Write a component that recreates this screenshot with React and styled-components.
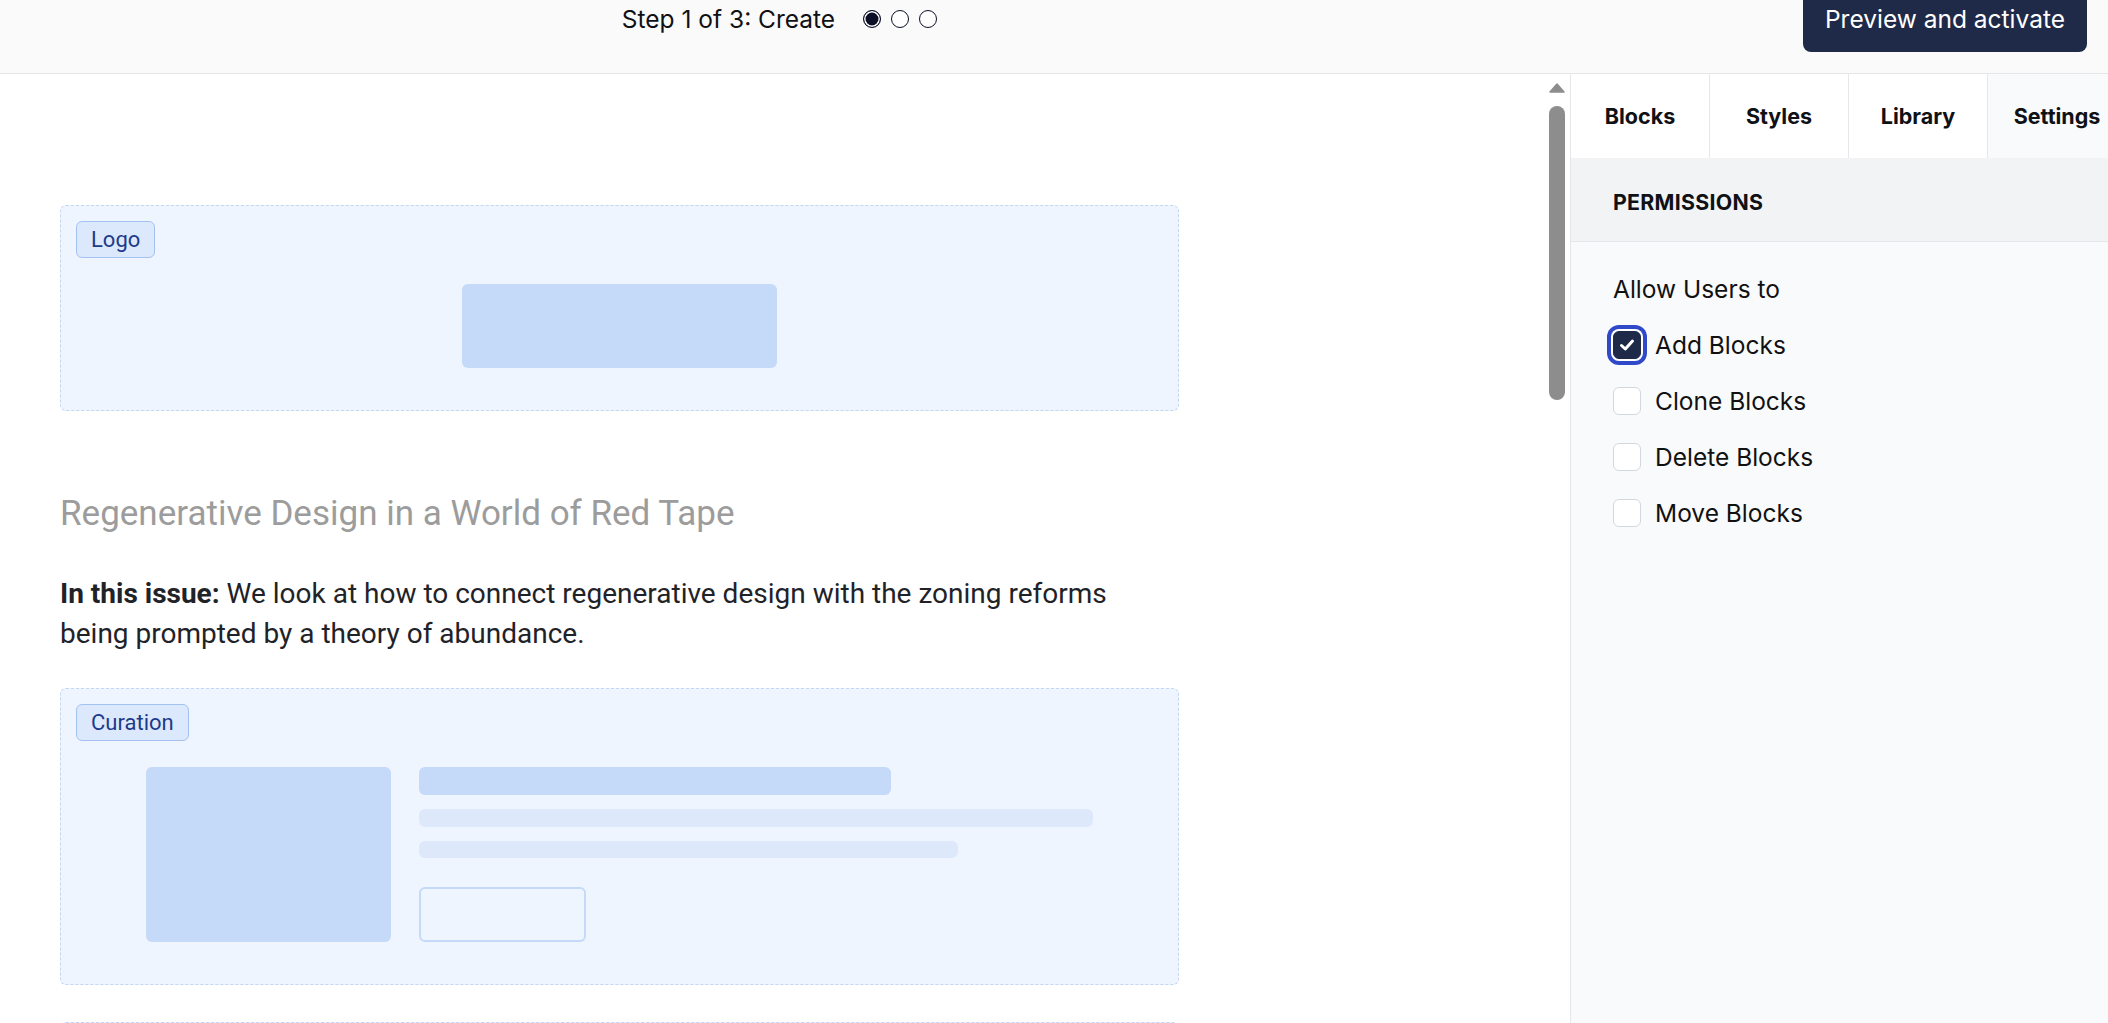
import React from 'react';
import styled, { createGlobalStyle } from 'styled-components';

const GlobalStyle = createGlobalStyle`
  html, body { margin: 0; padding: 0; height: 100%; overflow: hidden; background: #fff; }
  body { font-family: Inter, "Noto Sans", sans-serif; color: #111827; }
  *, *::before, *::after { box-sizing: border-box; }
`;

const Page = styled.div`
  width: 2108px;
  height: 1023px;
  display: flex;
  flex-direction: column;
  overflow: hidden;
`;

const Header = styled.header`
  flex: 0 0 74px;
  background: #fafafa;
  border-bottom: 1px solid #e6e6e6;
  display: flex;
  align-items: flex-start;
`;

const HeaderRow = styled.div`
  display: flex;
  align-items: center;
  width: 100%;
  height: 66px;
  margin-top: -14px;
`;

const StepArea = styled.div`
  flex: 0 0 1559px;
  display: flex;
  justify-content: center;
  align-items: center;
  gap: 28px;
`;

const StepText = styled.span`
  font-size: 24.5px;
  color: #0f1115;
`;

const Dots = styled.div`
  display: flex;
  gap: 10px;
`;

const Dot = styled.span`
  width: 18px;
  height: 18px;
  border-radius: 50%;
  border: 1.5px solid #0b1026;
  background: ${p => (p.$active ? '#0b1026' : '#fff')};
  box-shadow: ${p => (p.$active ? 'inset 0 0 0 1.5px #fff' : 'none')};
`;

const Spacer = styled.div`
  flex: 1;
`;

const PrimaryButton = styled.button`
  height: 66px;
  padding: 0 22px;
  margin-right: 21px;
  background: #1f2a48;
  color: #fff;
  border: none;
  border-radius: 8px;
  font-family: Inter, sans-serif;
  font-size: 24.5px;
  cursor: pointer;
`;

const Body = styled.div`
  flex: 1;
  display: flex;
  min-height: 0;
`;

const Canvas = styled.main`
  flex: 0 0 1570px;
  display: flex;
  overflow: hidden;
  background: #fff;
`;

const CanvasScroll = styled.div`
  flex: 1;
  padding: 131px 0 0 60px;
  overflow: hidden;
`;

const Column = styled.div`
  width: 1119px;
  display: flex;
  flex-direction: column;
  font-family: Roboto, "Liberation Sans", sans-serif;
`;

const Scrollbar = styled.div`
  flex: 0 0 16px;
  margin-right: 5px;
  display: flex;
  flex-direction: column;
  align-items: center;
  padding-top: 9px;
`;

const Thumb = styled.div`
  margin-top: 13px;
  width: 16px;
  height: 294px;
  border-radius: 8px;
  background: #8d8d8d;
`;

const Block = styled.section`
  display: flex;
  flex-direction: column;
  flex-shrink: 0;
  min-height: ${p => p.$minH || 0}px;
  background: #eff5ff;
  border: 1px dashed #c3d6f2;
  border-radius: 6px;
  padding: 15px 15px 42px;
  margin-top: ${p => p.$mt || 0}px;
`;

const Badge = styled.span`
  align-self: flex-start;
  height: 37px;
  padding: 0 14px;
  background: #dce9fd;
  border: 1px solid #a4c2f0;
  border-radius: 6px;
  color: #1e3a8a;
  font-size: 22px;
  line-height: 35px;
`;

const BlockBody = styled.div`
  margin-top: 26px;
  display: flex;
  justify-content: ${p => (p.$center ? 'center' : 'flex-start')};
  padding: ${p => (p.$center ? '0' : '0 70px')};
  gap: 28px;
`;

const LogoShape = styled.div`
  width: 315px;
  height: 84px;
  border-radius: 6px;
  background: #c5d9f9;
`;

const ImageShape = styled.div`
  flex: 0 0 245px;
  height: 175px;
  border-radius: 6px;
  background: #c5d9f9;
`;

const TextCol = styled.div`
  flex: 1;
  display: flex;
  flex-direction: column;
`;

const Bar = styled.div`
  width: ${p => p.$w}%;
  height: ${p => p.$h}px;
  margin-top: ${p => p.$mt || 0}px;
  border-radius: 6px;
  background: ${p => (p.$strong ? '#c5d9f9' : '#dde8fb')};
`;

const GhostButton = styled.div`
  margin-top: 29px;
  width: 167px;
  height: 55px;
  border: 2px solid #c5d9f9;
  border-radius: 6px;
`;

const Title = styled.h2`
  margin: 82px 0 0;
  font-size: 35px;
  line-height: 42px;
  font-weight: 400;
  color: #9c9c9c;
`;

const Paragraph = styled.p`
  margin: 39px 0 0;
  max-width: 1100px;
  font-size: 28px;
  line-height: 40px;
  color: #1f2328;
  strong { font-weight: 700; }
`;

const Sidebar = styled.aside`
  flex: 1;
  min-width: 0;
  display: flex;
  flex-direction: column;
  background: #f9fafb;
  border-left: 1px solid #e5e7eb;
  overflow: hidden;
`;

const Tabs = styled.nav`
  flex: 0 0 84px;
  display: flex;
`;

const Tab = styled.button`
  flex: 0 0 139px;
  border: none;
  border-right: 1px solid #e5e7eb;
  background: ${p => (p.$active ? '#f8fafc' : '#fff')};
  font-family: Inter, sans-serif;
  font-weight: 700;
  font-size: 21.5px;
  color: #0f1115;
  padding: 0;
`;

const SectionHeader = styled.div`
  flex: 0 0 84px;
  display: flex;
  align-items: center;
  padding: 5px 0 0 42px;
  background: #f1f3f5;
  border-bottom: 1px solid #e5e7eb;
  font-weight: 700;
  font-size: 21.3px;
  letter-spacing: 0.3px;
  color: #0f1115;
`;

const Panel = styled.div`
  padding: 31px 42px;
  display: flex;
  flex-direction: column;
`;

const PanelLabel = styled.div`
  font-size: 24.5px;
  line-height: 32px;
  color: #111;
  margin-bottom: 12px;
`;

const Row = styled.label`
  height: 56px;
  display: flex;
  align-items: center;
  gap: 14px;
  font-size: 24.5px;
  color: #111;
`;

const Box = styled.span`
  width: 28px;
  height: 28px;
  border-radius: 6px;
  display: flex;
  align-items: center;
  justify-content: center;
  background: ${p => (p.$checked ? '#1f2a48' : '#fff')};
  border: 1px solid ${p => (p.$checked ? '#1f2a48' : '#d4d7dd')};
  box-shadow: ${p => (p.$checked ? '0 0 0 2px #fff, 0 0 0 6px #2f49c9' : 'none')};
`;

const ArrowUp = () => (
  <svg width="16" height="10" viewBox="0 0 16 10">
    <path d="M8 1 L15 9 L1 9 Z" fill="#8d8d8d" stroke="#8d8d8d" strokeWidth="1.5" strokeLinejoin="round" />
  </svg>
);

const Check = () => (
  <svg width="20" height="20" viewBox="0 0 20 20">
    <path d="M4.5 10.5 L8.3 14 L15.5 6" fill="none" stroke="#fff" strokeWidth="3" strokeLinecap="round" strokeLinejoin="round" />
  </svg>
);

const permissions = [
  { label: 'Add Blocks', checked: true },
  { label: 'Clone Blocks', checked: false },
  { label: 'Delete Blocks', checked: false },
  { label: 'Move Blocks', checked: false },
];

export default function App() {
  return (
    <Page>
      <GlobalStyle />
      <Header>
        <HeaderRow>
          <StepArea>
            <StepText>Step 1 of 3: Create</StepText>
            <Dots>
              <Dot $active />
              <Dot />
              <Dot />
            </Dots>
          </StepArea>
          <Spacer />
          <PrimaryButton>Preview and activate</PrimaryButton>
        </HeaderRow>
      </Header>
      <Body>
        <Canvas>
          <CanvasScroll>
            <Column>
              <Block>
                <Badge>Logo</Badge>
                <BlockBody $center>
                  <LogoShape />
                </BlockBody>
              </Block>
              <Title>Regenerative Design in a World of Red Tape</Title>
              <Paragraph>
                <strong>In this issue:</strong> We look at how to connect regenerative design with the zoning reforms being prompted by a theory of abundance.
              </Paragraph>
              <Block $mt={34}>
                <Badge>Curation</Badge>
                <BlockBody>
                  <ImageShape />
                  <TextCol>
                    <Bar $w={70} $h={28} $strong />
                    <Bar $w={100} $h={18} $mt={14} />
                    <Bar $w={80} $h={17} $mt={14} />
                    <GhostButton />
                  </TextCol>
                </BlockBody>
              </Block>
              <Block $mt={37} $minH={200} />
            </Column>
          </CanvasScroll>
          <Scrollbar>
            <ArrowUp />
            <Thumb />
          </Scrollbar>
        </Canvas>
        <Sidebar>
          <Tabs>
            <Tab>Blocks</Tab>
            <Tab>Styles</Tab>
            <Tab>Library</Tab>
            <Tab $active>Settings</Tab>
          </Tabs>
          <SectionHeader>PERMISSIONS</SectionHeader>
          <Panel>
            <PanelLabel>Allow Users to</PanelLabel>
            {permissions.map(p => (
              <Row key={p.label}>
                <Box $checked={p.checked}>{p.checked && <Check />}</Box>
                {p.label}
              </Row>
            ))}
          </Panel>
        </Sidebar>
      </Body>
    </Page>
  );
}
